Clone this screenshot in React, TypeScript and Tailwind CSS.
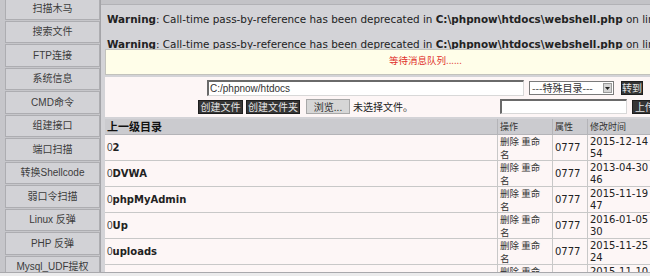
const nav = [
  "扫描木马",
  "搜索文件",
  "FTP连接",
  "系统信息",
  "CMD命令",
  "组建接口",
  "端口扫描",
  "转换Shellcode",
  "弱口令扫描",
  "Linux 反弹",
  "PHP 反弹",
  "Mysql_UDF提权",
];

const rows = [
  { name: "2", date: "2015-12-14", t: "54" },
  { name: "DVWA", date: "2013-04-30", t: "46" },
  { name: "phpMyAdmin", date: "2015-11-19", t: "47" },
  { name: "Up", date: "2016-01-05", t: "30" },
  { name: "uploads", date: "2015-11-25", t: "24" },
  { name: "upload", date: "2015-11-10", t: "12" },
];

function Warning() {
  return (
    <div className="h-[12px] leading-[12px] whitespace-nowrap text-[10.4px] text-[#222]">
      <b>Warning</b>: Call-time pass-by-reference has been deprecated in{" "}
      <b>C:\phpnow\htdocs\webshell.php</b> on line <b>112</b>
    </div>
  );
}

function DarkBtn({ children, w }: { children: React.ReactNode; w: string }) {
  return (
    <div
      className={`${w} h-[14px] bg-[#353535] border border-[#1e1e1e] text-[#e4e4e4] text-[10px] leading-[12px] flex items-center justify-center font-['Noto_Sans_CJK_SC',sans-serif]`}
    >
      {children}
    </div>
  );
}

export default function App() {
  return (
    <div className="w-[650px] h-[276px] overflow-hidden flex flex-col bg-[#c8c8cc] font-['DejaVu_Sans','Noto_Sans_CJK_SC',sans-serif]">
      <div className="flex h-[272px] shrink-0 overflow-hidden">
        {/* sidebar */}
        <div className="w-[100px] shrink-0 bg-[#c6c6ca] pl-[5px] overflow-hidden">
          <div className="flex flex-col gap-[1px] -mt-[3px]">
            {nav.map((n) => (
              <div
                key={n}
                className="h-[22.5px] shrink-0 bg-[#d2d2d6] border border-[#adadb1] flex items-center justify-center text-[10px] text-[#3c3c3c] whitespace-nowrap font-['Liberation_Sans','Noto_Sans_CJK_SC',sans-serif]"
              >
                {n}
              </div>
            ))}
          </div>
        </div>
        {/* main */}
        <div className="w-[550px] shrink-0 flex flex-col bg-[#d3d3d7] border-l border-[#a4a4a8] overflow-hidden">
          <div className="h-[5px] shrink-0 bg-[#c3c3c7] border-b border-[#b2b2b6]" />
          <div className="pl-[6px] h-[44px] shrink-0">
            <div className="pt-[8px]">
              <Warning />
            </div>
            <div className="mt-[13px]">
              <Warning />
            </div>
          </div>
          <div className="ml-[4px] w-[600px] shrink-0">
            <div className="h-[26px] bg-[#fffee9] border border-[#c2c2bc] pl-[283px] pt-[4px] text-[9.5px] leading-[12px] text-[#e0302c] font-['Noto_Sans_CJK_SC',sans-serif]">
              等待消息队列......
            </div>
            <div className="h-[2px]" />
            <div className="h-[40px] bg-[#fdf6f6] pt-[3px]">
              <div className="flex items-center h-[16px]">
                <div className="ml-[102px] w-[317px] h-[16px] bg-white border-t-2 border-l-2 border-t-[#6a6a6a] border-l-[#6a6a6a] border-b border-r border-b-[#d8d8d8] border-r-[#d8d8d8] text-[10px] leading-[13px] pl-[1px] text-[#333] font-['Liberation_Sans',sans-serif]">
                  C:/phpnow/htdocs
                </div>
                <div className="ml-[5px] w-[85px] h-[14px] bg-white border border-[#7a7a7a] flex items-center text-[10px] text-[#333] font-['Noto_Sans_CJK_SC',sans-serif]">
                  <span className="pl-[2px] leading-[12px] flex-1 whitespace-nowrap">---特殊目录---</span>
                  <span className="w-[9px] h-[10px] mr-[1px] bg-[#d4d4d4] border border-[#9a9a9a] flex items-center justify-center">
                    <svg width="5" height="3" viewBox="0 0 5 3">
                      <path d="M0 0h5L2.5 3z" fill="#222" />
                    </svg>
                  </span>
                </div>
                <div className="ml-[7px]">
                  <DarkBtn w="w-[22px]">转到</DarkBtn>
                </div>
              </div>
              <div className="flex items-center h-[15px] mt-[3px]">
                <div className="ml-[93px]">
                  <DarkBtn w="w-[45px]">创建文件</DarkBtn>
                </div>
                <div className="ml-[3px]">
                  <DarkBtn w="w-[54px]">创建文件夹</DarkBtn>
                </div>
                <div className="ml-[6px] w-[44px] h-[15px] bg-[#d6d6d6] border border-[#a8a8a8] text-[10px] leading-[12px] text-[#333] flex items-center justify-center font-['Noto_Sans_CJK_SC',sans-serif]">
                  浏览...
                </div>
                <div className="ml-[3px] w-[147px] text-[10px] leading-[12px] text-[#222] font-['Noto_Sans_CJK_SC',sans-serif]">
                  未选择文件。
                </div>
                <div className="w-[127px] h-[15px] bg-white border-t-2 border-l-2 border-t-[#6a6a6a] border-l-[#6a6a6a] border-b border-r border-b-[#d8d8d8] border-r-[#d8d8d8]" />
                <div className="ml-[5px]">
                  <DarkBtn w="w-[26px]">上传</DarkBtn>
                </div>
              </div>
            </div>
            <div className="h-[2px]" />
            {/* table */}
            <div className="flex h-[16px] bg-[#cbcbcf] border-b border-[#b4b4b8] text-[9px] leading-[15px] text-[#333] font-['Noto_Sans_CJK_SC',sans-serif]">
              <div className="w-[392px] pl-[2px] font-bold text-[11px] text-[#111]">上一级目录</div>
              <div className="w-[55px] pl-[2px] border-l border-[#b4b4b8]">操作</div>
              <div className="w-[35px] pl-[2px] border-l border-[#b4b4b8]">属性</div>
              <div className="w-[100px] pl-[2px] border-l border-[#b4b4b8]">修改时间</div>
            </div>
            {rows.map((r) => (
              <div
                key={r.name}
                className="flex h-[26px] bg-[#fdf6f6] border-b-[1.5px] border-[#c8c8c8] text-[10px] text-[#222]"
              >
                <div className="w-[392px] pl-[2px] flex items-center whitespace-nowrap">
                  <span className="font-['Liberation_Sans',sans-serif] text-[#444]">0</span>
                  <b>{r.name}</b>
                </div>
                <div className="w-[55px] pl-[2px] border-l border-[#c8c8c8] flex flex-col justify-center text-[9.5px] leading-[12.5px] text-[#333] font-['Noto_Sans_CJK_SC',sans-serif]">
                  <span>删除 重命</span>
                  <span>名</span>
                </div>
                <div className="w-[35px] pl-[2px] border-l border-[#c8c8c8] flex items-center">0777</div>
                <div className="w-[100px] pl-[2px] border-l border-[#c8c8c8] flex flex-col justify-center leading-[12px] whitespace-nowrap">
                  <span>{r.date}</span>
                  <span>{r.t}</span>
                </div>
              </div>
            ))}
          </div>
        </div>
      </div>
      <div className="h-[4px] shrink-0 bg-[#ebebec] border-t border-[#a8a8ac]" />
    </div>
  );
}
